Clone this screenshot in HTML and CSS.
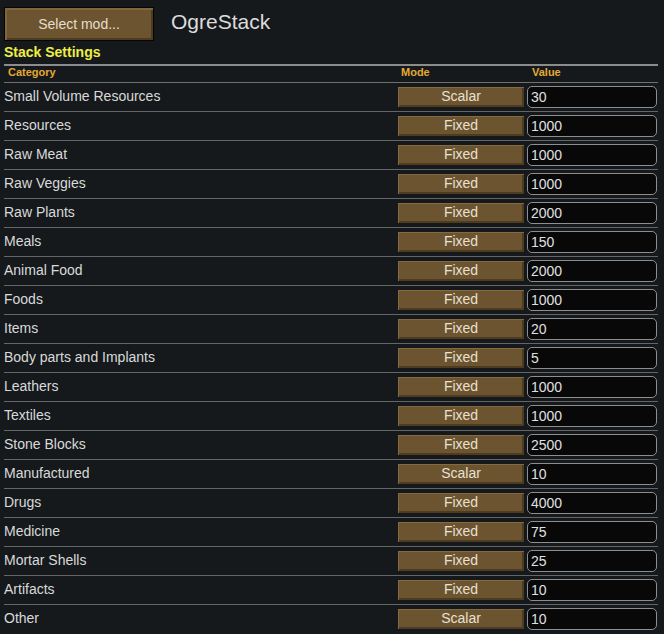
FILE: index.html
```html
<!DOCTYPE html>
<html>
<head>
<meta charset="utf-8">
<link rel="stylesheet" href="styles.css">
</head>
<body>
<div class="top">
  <div class="select-btn">Select mod...</div>
  <div class="title">OgreStack</div>
</div>
<div class="section">Stack Settings</div>
<div class="table">
  <div class="head">
    <div class="h-cat">Category</div>
    <div class="h-mode">Mode</div>
    <div class="h-val">Value</div>
  </div>
  <div class="row"><div class="cat">Small Volume Resources</div><div class="mode">Scalar</div><div class="val">30</div></div>
  <div class="row"><div class="cat">Resources</div><div class="mode">Fixed</div><div class="val">1000</div></div>
  <div class="row"><div class="cat">Raw Meat</div><div class="mode">Fixed</div><div class="val">1000</div></div>
  <div class="row"><div class="cat">Raw Veggies</div><div class="mode">Fixed</div><div class="val">1000</div></div>
  <div class="row"><div class="cat">Raw Plants</div><div class="mode">Fixed</div><div class="val">2000</div></div>
  <div class="row"><div class="cat">Meals</div><div class="mode">Fixed</div><div class="val">150</div></div>
  <div class="row"><div class="cat">Animal Food</div><div class="mode">Fixed</div><div class="val">2000</div></div>
  <div class="row"><div class="cat">Foods</div><div class="mode">Fixed</div><div class="val">1000</div></div>
  <div class="row"><div class="cat">Items</div><div class="mode">Fixed</div><div class="val">20</div></div>
  <div class="row"><div class="cat">Body parts and Implants</div><div class="mode">Fixed</div><div class="val">5</div></div>
  <div class="row"><div class="cat">Leathers</div><div class="mode">Fixed</div><div class="val">1000</div></div>
  <div class="row"><div class="cat">Textiles</div><div class="mode">Fixed</div><div class="val">1000</div></div>
  <div class="row"><div class="cat">Stone Blocks</div><div class="mode">Fixed</div><div class="val">2500</div></div>
  <div class="row"><div class="cat">Manufactured</div><div class="mode">Scalar</div><div class="val">10</div></div>
  <div class="row"><div class="cat">Drugs</div><div class="mode">Fixed</div><div class="val">4000</div></div>
  <div class="row"><div class="cat">Medicine</div><div class="mode">Fixed</div><div class="val">75</div></div>
  <div class="row"><div class="cat">Mortar Shells</div><div class="mode">Fixed</div><div class="val">25</div></div>
  <div class="row"><div class="cat">Artifacts</div><div class="mode">Fixed</div><div class="val">10</div></div>
  <div class="row last"><div class="cat">Other</div><div class="mode">Scalar</div><div class="val">10</div></div>
</div>
</body>
</html>
```
FILE: styles.css
```css
html, body {
  margin: 0;
  padding: 0;
  background: #15191c;
  font-family: "Liberation Sans", Arial, sans-serif;
  color: #d9d9d9;
  overflow: hidden;
}
.top {
  display: flex;
  align-items: center;
  gap: 17px;
  padding: 7px 0 0 4px;
  height: 34px;
}
.select-btn {
  box-sizing: border-box;
  width: 150px;
  height: 34px;
  border: 1px solid #050505;
  background: #6c5430;
  box-shadow: inset 2px 2px 0 #7f663d, inset -2px -2px 0 #4e3c20;
  color: #e6ddcb;
  font-size: 14px;
  display: flex;
  align-items: center;
  justify-content: center;
  padding-bottom: 1px;
}
.title {
  font-size: 21px;
  color: #dcdcdc;
  margin-top: -4px;
}
.section {
  margin: 2px 0 0 4px;
  font-size: 14px;
  line-height: 18px;
  font-weight: bold;
  color: #eeee45;
}
.table {
  margin: 3px 0 0 4px;
  width: 654px;
  border-top: 2px solid #8c8c8c;
}
.head, .row {
  display: grid;
  grid-template-columns: 394px 129px 131px;
  align-items: center;
}
.head {
  box-sizing: border-box;
  height: 17px;
  padding-bottom: 3px;
  line-height: 13px;
  border-bottom: 1px solid #707070;
  font-size: 11px;
  font-weight: bold;
  color: #e3a935;
}
.h-cat { padding-left: 4px; }
.h-mode { padding-left: 3px; }
.h-val { padding-left: 5px; }
.row {
  height: 28px;
  border-bottom: 1px solid #646567;
  font-size: 14px;
}
.row.last { border-bottom: none; }
.cat { padding-bottom: 2px; }
.mode {
  box-sizing: border-box;
  width: 126px;
  height: 20px;
  padding-bottom: 2px;
  background: #6c5430;
  box-shadow: inset 1px 1px 0 #836a40, inset -2px -2px 0 #4e3c20;
  color: #e8e0d0;
  display: flex;
  align-items: center;
  justify-content: center;
}
.val {
  box-sizing: border-box;
  width: 130px;
  height: 22px;
  border: 1px solid #8e8e8e;
  border-radius: 5px;
  background: #080808;
  color: #e0e0e0;
  padding-left: 3px;
  display: flex;
  align-items: center;
}
```
